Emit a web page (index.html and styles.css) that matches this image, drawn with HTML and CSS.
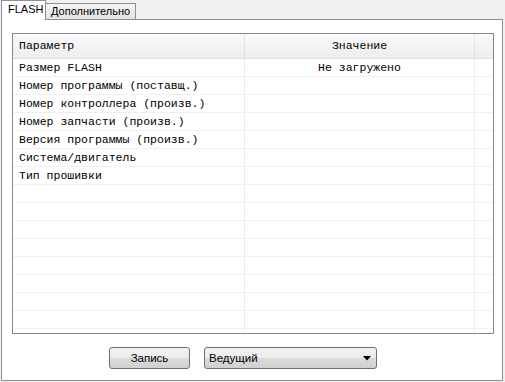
FILE: index.html
```html
<!DOCTYPE html>
<html lang="ru">
<head>
    <meta charset="UTF-8">
    <title>FLASH</title>
    <link rel="stylesheet" href="styles.css">
</head>
<body>

    <!-- Tabs -->
    <div class="tabs">
        <div class="tab active">FLASH</div>
        <div class="tab">Дополнительно</div>
    </div>

    <div class="pane">
        <div class="grid">
            <div class="row head">
                <div class="cell">Параметр</div>
                <div class="cell center">Значение</div>
                <div class="cell"></div>
            </div>
            <div class="row"><div class="cell">Размер FLASH</div><div class="cell center">Не загружено</div><div class="cell"></div></div>
            <div class="row"><div class="cell">Номер программы (поставщ.)</div><div class="cell"></div><div class="cell"></div></div>
            <div class="row"><div class="cell">Номер контроллера (произв.)</div><div class="cell"></div><div class="cell"></div></div>
            <div class="row"><div class="cell">Номер запчасти (произв.)</div><div class="cell"></div><div class="cell"></div></div>
            <div class="row"><div class="cell">Версия программы (произв.)</div><div class="cell"></div><div class="cell"></div></div>
            <div class="row"><div class="cell">Система/двигатель</div><div class="cell"></div><div class="cell"></div></div>
            <div class="row"><div class="cell">Тип прошивки</div><div class="cell"></div><div class="cell"></div></div>
            <div class="row"><div class="cell"></div><div class="cell"></div><div class="cell"></div></div>
            <div class="row"><div class="cell"></div><div class="cell"></div><div class="cell"></div></div>
            <div class="row"><div class="cell"></div><div class="cell"></div><div class="cell"></div></div>
            <div class="row"><div class="cell"></div><div class="cell"></div><div class="cell"></div></div>
            <div class="row"><div class="cell"></div><div class="cell"></div><div class="cell"></div></div>
            <div class="row"><div class="cell"></div><div class="cell"></div><div class="cell"></div></div>
            <div class="row"><div class="cell"></div><div class="cell"></div><div class="cell"></div></div>
            <div class="row"><div class="cell"></div><div class="cell"></div><div class="cell"></div></div>
            <div class="row"><div class="cell"></div><div class="cell"></div><div class="cell"></div></div>
        </div>

        <div class="controls">
            <button class="btn">Запись</button>
            <div class="select">
                <span>Ведущий</span>
                <svg width="8" height="5" viewBox="0 0 8 5"><path d="M0 0H8L4 4.5Z" fill="#000"/></svg>
            </div>
        </div>
    </div>

</body>
</html>
```

FILE: styles.css
```css
* {
    box-sizing: border-box;
    margin: 0;
    padding: 0;
}

body {
    background: #f0f0f0;
    font-family: "Liberation Sans", Arial, sans-serif;
    font-size: 11.5px;
    color: #000;
    width: 505px;
    height: 382px;
    overflow: hidden;
}

/* Tabs */
.tabs {
    display: flex;
    align-items: flex-end;
    padding: 1px 0 0 1px;
    height: 20px;
    margin-bottom: -1px;
    position: relative;
    z-index: 1;
    font-size: 11px;
}

.tab {
    height: 16px;
    padding: 0 5px 0 5px;
    border: 1px solid #8c9199;
    border-bottom: none;
    border-left: none;
    background: linear-gradient(#f4f4f4, #e2e2e2);
    line-height: 15px;
    margin-bottom: 1px;
}

.tab.active {
    height: 20px;
    padding: 0 0 0 6px;
    width: 45px;
    background: #fff;
    line-height: 16px;
    margin-bottom: 0;
    border-left: 1px solid #8c9199;
}

/* Pane */
.pane {
    margin-left: 1px;
    width: 502px;
    height: 362px;
    background: #fff;
    border: 1px solid #8c9199;
    padding: 13px 0 0 10px;
}

.grid {
    width: 482px;
    height: 301px;
    border: 1px solid #828790;
    overflow: hidden;
    font-family: "Liberation Mono", "Courier New", monospace;
    font-size: 11.5px;
}

.row {
    display: grid;
    grid-template-columns: 232px 230px 18px;
    height: 18px;
    border-bottom: 1px solid #f0f0f0;
}

.row.head {
    height: 25px;
    background: linear-gradient(#fafafa, #ededed);
    border-bottom: 1px solid #e0e0e0;
}

.cell {
    border-right: 1px solid #ececec;
    padding: 1px 0 0 6px;
    line-height: 16px;
    white-space: nowrap;
    overflow: hidden;
}

.row.head .cell {
    padding-top: 0;
    line-height: 24px;
    border-right-color: #e2e2e2;
}

.cell:last-child {
    border-right: none;
}

.center {
    text-align: center;
    padding-left: 0;
}

/* Bottom controls */
.controls {
    display: flex;
    gap: 14px;
    padding: 13px 0 0 97px;
}

.btn {
    width: 81px;
    height: 22px;
    border: 1px solid #707070;
    border-radius: 3px;
    background: linear-gradient(#f2f2f2 0%, #ebebeb 50%, #dddddd 51%, #cfcfcf 100%);
    font-family: "Liberation Sans", Arial, sans-serif;
    font-size: 11.5px;
    color: #000;
}

.select {
    width: 173px;
    height: 22px;
    border: 1px solid #707070;
    border-radius: 3px;
    background: linear-gradient(#f2f2f2 0%, #ebebeb 50%, #dddddd 51%, #cfcfcf 100%);
    display: flex;
    align-items: center;
    justify-content: space-between;
    padding: 0 5px 0 4px;
}
```
